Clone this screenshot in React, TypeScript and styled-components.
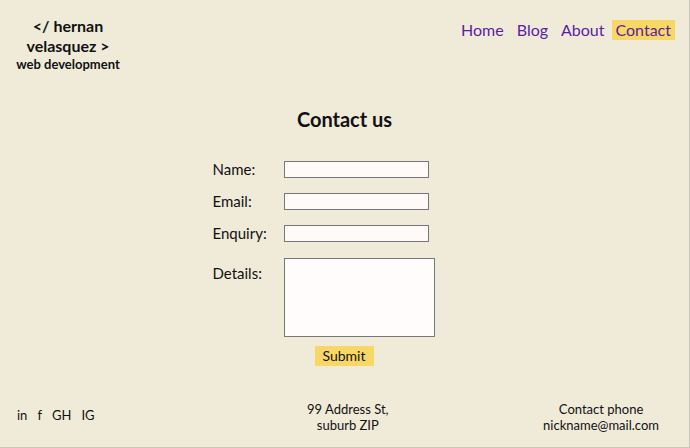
import React from "react";
import styled, { createGlobalStyle } from "styled-components";

const Global = createGlobalStyle`
  html, body { margin: 0; padding: 0; }
  body {
    background: #f0ebd9;
    font-family: Lato, "Noto Sans", sans-serif;
    color: #111;
  }
`;

const Page = styled.div`
  width: 690px;
  height: 448px;
  box-sizing: border-box;
  border-right: 1px solid #c9c7bd;
  border-bottom: 1px solid #c9c7bd;
  display: flex;
  flex-direction: column;
  background: #f0ebd9;
`;

const Header = styled.header`
  display: flex;
  justify-content: space-between;
  align-items: flex-start;
  padding: 16px 14px 0 16px;
`;

const Logo = styled.div`
  width: 104px;
  text-align: center;
  font-weight: 700;
  font-size: 16px;
  line-height: 20px;
`;

const LogoSub = styled.div`
  font-size: 13px;
  line-height: 16px;
`;

const Nav = styled.nav`
  display: flex;
  margin-top: 4px;
`;

const NavLink = styled.a<{ $active?: boolean }>`
  display: inline-block;
  font-size: 16px;
  line-height: 20px;
  color: #5a1ea6;
  text-decoration: none;
  padding: ${(p) => (p.$active ? "0 4px" : "0")};
  margin-left: ${(p) => (p.$active ? "7px" : "13px")};
  background: ${(p) => (p.$active ? "#f8d865" : "transparent")};
`;

const Main = styled.main`
  flex: 1;
  display: flex;
  flex-direction: column;
  align-items: center;
`;

const Title = styled.h1`
  margin: 35px 0 29px 0;
  font-size: 20px;
  line-height: 24px;
  font-weight: 700;
`;

const Form = styled.form`
  display: grid;
  grid-template-columns: 71px auto;
  row-gap: 14px;
  align-items: center;
  margin-right: 42px;
`;

const Label = styled.label<{ $top?: boolean }>`
  font-size: 15px;
  line-height: 18px;
  align-self: ${(p) => (p.$top ? "start" : "center")};
  padding-top: ${(p) => (p.$top ? "8px" : "0")};
`;

const Input = styled.input`
  width: 145px;
  height: 17px;
  box-sizing: border-box;
  background: #fdfaf8;
  border: 1px solid #777;
  margin: 0;
  padding: 0;
`;

const TextArea = styled.textarea`
  display: block;
  width: 151px;
  height: 79px;
  box-sizing: border-box;
  background: #fffcfb;
  border: 1px solid #777;
  margin: 2px 0 0 0;
  resize: none;
`;

const Submit = styled.button`
  grid-column: 2;
  justify-self: start;
  margin-top: -5px;
  margin-left: 31px;
  background: #f8d865;
  border: none;
  font-family: inherit;
  font-size: 14px;
  line-height: 20px;
  padding: 0 8px;
  color: #111;
`;

const Footer = styled.footer`
  display: flex;
  justify-content: space-between;
  align-items: flex-start;
  padding: 0 30px 14px 17px;
  font-size: 13px;
  line-height: 16px;
`;

const Social = styled.div`
  display: flex;
  gap: 10px;
  margin-top: 8px;
`;

const Center = styled.div<{ $shift?: number }>`
  text-align: center;
  margin-left: ${(p) => p.$shift ?? 0}px;
  margin-top: 2px;
`;

export default function App() {
  return (
    <>
      <Global />
      <Page>
        <Header>
          <Logo>
            &lt;/ hernan
            <br />
            velasquez &gt;
            <LogoSub>web development</LogoSub>
          </Logo>
          <Nav>
            <NavLink href="#">Home</NavLink>
            <NavLink href="#">Blog</NavLink>
            <NavLink href="#">About</NavLink>
            <NavLink href="#" $active>
              Contact
            </NavLink>
          </Nav>
        </Header>
        <Main>
          <Title>Contact us</Title>
          <Form onSubmit={(e) => e.preventDefault()}>
            <Label>Name:</Label>
            <Input type="text" />
            <Label>Email:</Label>
            <Input type="text" />
            <Label>Enquiry:</Label>
            <Input type="text" />
            <Label $top>Details:</Label>
            <TextArea />
            <Submit type="submit">Submit</Submit>
          </Form>
        </Main>
        <Footer>
          <Social>
            <span>in</span>
            <span>f</span>
            <span>GH</span>
            <span>IG</span>
          </Social>
          <Center $shift={58}>
            99 Address St,
            <br />
            suburb ZIP
          </Center>
          <Center>
            Contact phone
            <br />
            nickname@mail.com
          </Center>
        </Footer>
      </Page>
    </>
  );
}
